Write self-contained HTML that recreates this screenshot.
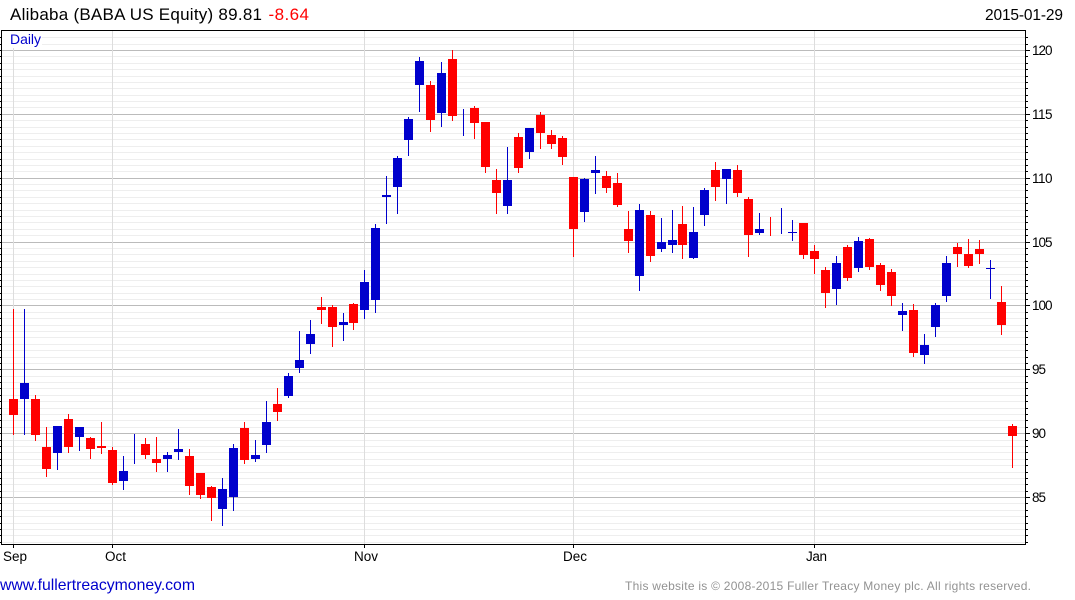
<!DOCTYPE html>
<html><head><meta charset="utf-8"><style>
html,body{margin:0;padding:0;background:#fff;width:1075px;height:600px;overflow:hidden}
svg{display:block;font-family:"Liberation Sans",Arial,sans-serif}
</style></head><body>
<svg width="1075" height="600" viewBox="0 0 1075 600" xmlns="http://www.w3.org/2000/svg">
<g shape-rendering="crispEdges" fill="none">
<path stroke="#eee" d="M2 37.5H1025M2 44.5H1025M2 56.5H1025M2 63.5H1025M2 69.5H1025M2 76.5H1025M2 82.5H1025M2 88.5H1025M2 95.5H1025M2 101.5H1025M2 107.5H1025M2 120.5H1025M2 127.5H1025M2 133.5H1025M2 139.5H1025M2 146.5H1025M2 152.5H1025M2 159.5H1025M2 165.5H1025M2 171.5H1025M2 184.5H1025M2 190.5H1025M2 197.5H1025M2 203.5H1025M2 210.5H1025M2 216.5H1025M2 222.5H1025M2 229.5H1025M2 235.5H1025M2 248.5H1025M2 254.5H1025M2 261.5H1025M2 267.5H1025M2 274.5H1025M2 280.5H1025M2 286.5H1025M2 293.5H1025M2 299.5H1025M2 312.5H1025M2 318.5H1025M2 325.5H1025M2 331.5H1025M2 337.5H1025M2 344.5H1025M2 350.5H1025M2 357.5H1025M2 363.5H1025M2 376.5H1025M2 382.5H1025M2 388.5H1025M2 395.5H1025M2 401.5H1025M2 408.5H1025M2 414.5H1025M2 420.5H1025M2 427.5H1025M2 440.5H1025M2 446.5H1025M2 452.5H1025M2 459.5H1025M2 465.5H1025M2 472.5H1025M2 478.5H1025M2 484.5H1025M2 491.5H1025M2 503.5H1025M2 510.5H1025M2 516.5H1025M2 523.5H1025M2 529.5H1025M2 535.5H1025M2 542.5H1025"/>
<path stroke="#bbb" d="M2 50.5H1025M2 114.5H1025M2 178.5H1025M2 242.5H1025M2 305.5H1025M2 369.5H1025M2 433.5H1025M2 497.5H1025"/>
<path stroke="#ddd" d="M13.5 31V544M112.5 31V544M364.5 31V544M573.5 31V544M814.5 31V544"/>
<rect x="2" y="31" width="40" height="17" fill="#fff"/>
<path stroke="#000" d="M1.5 30.5H1025.5V544.5H1.5Z"/>
<path stroke="#000" d="M0 37.5h1M0 44.5h1M0 50.5h1M0 56.5h1M0 63.5h1M0 69.5h1M0 76.5h1M0 82.5h1M0 88.5h1M0 95.5h1M0 101.5h1M0 107.5h1M0 114.5h1M0 120.5h1M0 127.5h1M0 133.5h1M0 139.5h1M0 146.5h1M0 152.5h1M0 159.5h1M0 165.5h1M0 171.5h1M0 178.5h1M0 184.5h1M0 190.5h1M0 197.5h1M0 203.5h1M0 210.5h1M0 216.5h1M0 222.5h1M0 229.5h1M0 235.5h1M0 242.5h1M0 248.5h1M0 254.5h1M0 261.5h1M0 267.5h1M0 274.5h1M0 280.5h1M0 286.5h1M0 293.5h1M0 299.5h1M0 305.5h1M0 312.5h1M0 318.5h1M0 325.5h1M0 331.5h1M0 337.5h1M0 344.5h1M0 350.5h1M0 357.5h1M0 363.5h1M0 369.5h1M0 376.5h1M0 382.5h1M0 388.5h1M0 395.5h1M0 401.5h1M0 408.5h1M0 414.5h1M0 420.5h1M0 427.5h1M0 433.5h1M0 440.5h1M0 446.5h1M0 452.5h1M0 459.5h1M0 465.5h1M0 472.5h1M0 478.5h1M0 484.5h1M0 491.5h1M0 497.5h1M0 503.5h1M0 510.5h1M0 516.5h1M0 523.5h1M0 529.5h1M0 535.5h1M0 542.5h1"/>
<path stroke="#000" d="M1026 37.5h2M1026 44.5h2M1026 56.5h2M1026 63.5h2M1026 69.5h2M1026 76.5h2M1026 82.5h2M1026 88.5h2M1026 95.5h2M1026 101.5h2M1026 107.5h2M1026 120.5h2M1026 127.5h2M1026 133.5h2M1026 139.5h2M1026 146.5h2M1026 152.5h2M1026 159.5h2M1026 165.5h2M1026 171.5h2M1026 184.5h2M1026 190.5h2M1026 197.5h2M1026 203.5h2M1026 210.5h2M1026 216.5h2M1026 222.5h2M1026 229.5h2M1026 235.5h2M1026 248.5h2M1026 254.5h2M1026 261.5h2M1026 267.5h2M1026 274.5h2M1026 280.5h2M1026 286.5h2M1026 293.5h2M1026 299.5h2M1026 312.5h2M1026 318.5h2M1026 325.5h2M1026 331.5h2M1026 337.5h2M1026 344.5h2M1026 350.5h2M1026 357.5h2M1026 363.5h2M1026 376.5h2M1026 382.5h2M1026 388.5h2M1026 395.5h2M1026 401.5h2M1026 408.5h2M1026 414.5h2M1026 420.5h2M1026 427.5h2M1026 440.5h2M1026 446.5h2M1026 452.5h2M1026 459.5h2M1026 465.5h2M1026 472.5h2M1026 478.5h2M1026 484.5h2M1026 491.5h2M1026 503.5h2M1026 510.5h2M1026 516.5h2M1026 523.5h2M1026 529.5h2M1026 535.5h2M1026 542.5h2M1026 50.5h4M1026 114.5h4M1026 178.5h4M1026 242.5h4M1026 305.5h4M1026 369.5h4M1026 433.5h4M1026 497.5h4M13.5 545v3M112.5 545v3M364.5 545v3M573.5 545v3M814.5 545v3"/>
</g>
<g shape-rendering="crispEdges">
<path fill="#f00" d="M13 309h1V435h-1zM9 399h9V415H9z
M35 395h1V441h-1zM31 399h9V435H31z
M46 427h1V477h-1zM42 447h9V469H42z
M68 414h1V453h-1zM64 419h9V447H64z
M90 437h1V459h-1zM86 438h9V449H86z
M101 422h1V454h-1zM97 446h9V448H97z
M112 447h1V485h-1zM108 450h9V483H108z
M145 438h1V459h-1zM141 444h9V455H141z
M156 437h1V472h-1zM152 459h9V463H152z
M189 449h1V495h-1zM185 456h9V486H185z
M200 473h1V499h-1zM196 473h9V495H196z
M211 486h1V521h-1zM207 487h9V498H207z
M244 422h1V464h-1zM240 428h9V460H240z
M277 388h1V421h-1zM273 404h9V412H273z
M321 297h1V324h-1zM317 307h9V310H317z
M332 305h1V347h-1zM328 307h9V327H328z
M353 303h1V330h-1zM349 304h9V323H349z
M430 81h1V132h-1zM426 85h9V120H426z
M452 50h1V121h-1zM448 59h9V116H448z
M474 106h1V139h-1zM470 108h9V123H470z
M485 122h1V173h-1zM481 122h9V167H481z
M496 169h1V214h-1zM492 180h9V193H492z
M518 133h1V173h-1zM514 137h9V168H514z
M540 112h1V149h-1zM536 115h9V133H536z
M551 130h1V149h-1zM547 135h9V144H547z
M562 136h1V165h-1zM558 138h9V157H558z
M573 177h1V257h-1zM569 177h9V229H569z
M606 171h1V193h-1zM602 176h9V188H602z
M617 173h1V207h-1zM613 183h9V205H613z
M628 211h1V253h-1zM624 229h9V241H624z
M650 211h1V262h-1zM646 215h9V256H646z
M682 206h1V259h-1zM678 224h9V245H678z
M715 162h1V201h-1zM711 170h9V187H711z
M737 165h1V197h-1zM733 170h9V193H733z
M748 197h1V257h-1zM744 199h9V235H744z
M770 217h1V236h-1z
M803 223h1V259h-1zM799 223h9V255H799z
M814 245h1V274h-1zM810 251h9V259H810z
M825 267h1V308h-1zM821 270h9V293H821z
M847 245h1V281h-1zM843 247h9V278H843z
M869 238h1V270h-1zM865 239h9V267H865z
M880 263h1V291h-1zM876 265h9V285H876z
M891 269h1V306h-1zM887 272h9V296H887z
M913 304h1V357h-1zM909 310h9V353H909z
M957 243h1V267h-1zM953 247h9V254H953z
M968 239h1V268h-1zM964 254h9V266H964z
M979 240h1V264h-1zM975 249h9V254H975z
M1001 286h1V335h-1zM997 302h9V325H997z
M1012 424h1V468h-1zM1008 426h9V436H1008z"/>
<path fill="#00c" d="M24 309h1V435h-1zM20 383h9V399H20z
M57 426h1V470h-1zM53 426h9V453H53z
M79 427h1V451h-1zM75 427h9V437H75z
M123 456h1V490h-1zM119 471h9V481H119z
M134 434h1V464h-1z
M167 452h1V472h-1zM163 455h9V459H163z
M178 429h1V460h-1zM174 449h9V452H174z
M222 478h1V526h-1zM218 489h9V509H218z
M233 444h1V511h-1zM229 448h9V497H229z
M255 440h1V462h-1zM251 455h9V459H251z
M266 401h1V453h-1zM262 422h9V445H262z
M288 373h1V398h-1zM284 376h9V396H284z
M299 331h1V373h-1zM295 360h9V368H295z
M310 320h1V354h-1zM306 334h9V344H306z
M343 313h1V341h-1zM339 322h9V325H339z
M364 270h1V319h-1zM360 282h9V310H360z
M375 224h1V313h-1zM371 228h9V300H371z
M386 176h1V224h-1zM382 195h9V197H382z
M397 156h1V214h-1zM393 158h9V187H393z
M408 117h1V156h-1zM404 119h9V140H404z
M419 57h1V112h-1zM415 61h9V85H415z
M441 62h1V127h-1zM437 73h9V113H437z
M463 109h1V136h-1z
M507 147h1V214h-1zM503 180h9V206H503z
M529 128h1V159h-1zM525 128h9V152H525z
M584 178h1V222h-1zM580 179h9V212H580z
M595 156h1V194h-1zM591 170h9V173H591z
M639 204h1V291h-1zM635 210h9V276H635z
M661 218h1V252h-1zM657 242h9V249H657z
M672 210h1V253h-1zM668 240h9V245H668z
M693 207h1V259h-1zM689 232h9V258H689z
M704 188h1V226h-1zM700 190h9V215H700z
M726 169h1V204h-1zM722 169h9V179H722z
M759 213h1V235h-1zM755 229h9V233H755z
M781 208h1V234h-1z
M792 220h1V241h-1zM788 232h9V233H788z
M836 256h1V305h-1zM832 263h9V289H832z
M858 237h1V272h-1zM854 241h9V268H854z
M902 303h1V331h-1zM898 311h9V315H898z
M924 334h1V364h-1zM920 345h9V355H920z
M935 303h1V337h-1zM931 305h9V327H931z
M946 256h1V302h-1zM942 263h9V296H942z
M990 260h1V299h-1zM986 268h9V269H986z"/>
</g>
<text x="10" y="20" font-size="17" fill="#000" textLength="252">Alibaba (BABA US Equity) 89.81</text>
<text x="268.5" y="20" font-size="17" fill="#f00" textLength="40.5">-8.64</text>
<text x="985" y="20" font-size="15.5" fill="#000" textLength="78">2015-01-29</text>
<text x="10" y="44" font-size="14" fill="#00c" textLength="31">Daily</text>
<g font-size="13.5" fill="#000">
<text x="1032" y="55" textLength="20.5">120</text><text x="1032" y="119" textLength="20.5">115</text><text x="1032" y="183" textLength="20.5">110</text><text x="1032" y="247" textLength="20.5">105</text><text x="1032" y="310" textLength="20.5">100</text><text x="1032" y="374" textLength="14">95</text><text x="1032" y="438" textLength="14">90</text><text x="1032" y="502" textLength="14">85</text>
<text x="3" y="561" textLength="24">Sep</text><text x="105" y="561" textLength="21">Oct</text><text x="354" y="561">Nov</text><text x="563" y="561">Dec</text><text x="806" y="561" textLength="21">Jan</text>
</g>
<text x="0" y="590" font-size="15.8" fill="#00c" textLength="195">www.fullertreacymoney.com</text>
<text x="625" y="590" font-size="12" fill="#929292" textLength="406">This website is © 2008-2015 Fuller Treacy Money plc. All rights reserved.</text>
</svg>
</body></html>
